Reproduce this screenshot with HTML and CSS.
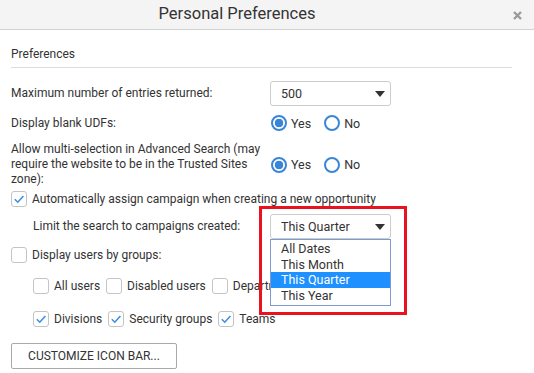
FILE: index.html
```html
<!DOCTYPE html>
<html lang="en">
<head>
  <meta charset="UTF-8" />
  <title>Personal Preferences</title>
  <link rel="stylesheet" href="styles.css">
</head>
<body>
  <div class="dialog">
    <div class="titlebar">
      <span class="title">Personal Preferences</span>
      <span class="close">
        <svg width="9" height="9" viewBox="0 0 9 9"><path d="M1 1 L8 8 M8 1 L1 8" stroke="#9a9a9a" stroke-width="2.4" /></svg>
      </span>
    </div>

    <div class="content">
      <div class="section-title">Preferences</div>

      <div class="row row-entries">
        <div class="label">Maximum number of entries returned:</div>
        <div class="select"><span>500</span><span class="caret"></span></div>
      </div>

      <div class="row row-udf">
        <div class="label">Display blank UDFs:</div>
        <div class="radios">
          <span class="radio checked"></span><span class="radio-text">Yes</span>
          <span class="radio"></span><span class="radio-text">No</span>
        </div>
      </div>

      <div class="row row-multi">
        <div class="label label-wrap">Allow multi-selection in Advanced Search (may require the website to be in the Trusted Sites zone):</div>
        <div class="radios">
          <span class="radio checked"></span><span class="radio-text">Yes</span>
          <span class="radio"></span><span class="radio-text">No</span>
        </div>
      </div>

      <div class="check-row row-campaign">
        <span class="checkbox checked"><svg width="16" height="16" viewBox="0 0 16 16"><path d="M3.8 8.2 L6.8 11.2 L12.4 5" fill="none" stroke="#3f8ee0" stroke-width="1.6" /></svg></span>
        <span>Automatically assign campaign when creating a new opportunity</span>
      </div>

      <div class="row row-limit">
        <div class="label indent">Limit the search to campaigns created:</div>
        <div class="select-wrap">
          <div class="select"><span>This Quarter</span><span class="caret"></span></div>
          <ul class="options">
            <li>All Dates</li>
            <li>This Month</li>
            <li class="selected">This Quarter</li>
            <li>This Year</li>
          </ul>
          <div class="highlight-box"></div>
        </div>
      </div>

      <div class="check-row row-groups">
        <span class="checkbox"></span>
        <span>Display users by groups:</span>
      </div>

      <div class="check-row indent row-users">
        <span class="checkbox"></span><span class="check-text">All users</span>
        <span class="checkbox"></span><span class="check-text">Disabled users</span>
        <span class="checkbox"></span><span class="check-text">Departments</span>
      </div>

      <div class="check-row indent row-divisions">
        <span class="checkbox checked"><svg width="16" height="16" viewBox="0 0 16 16"><path d="M3.8 8.2 L6.8 11.2 L12.4 5" fill="none" stroke="#3f8ee0" stroke-width="1.6" /></svg></span><span class="check-text">Divisions</span>
        <span class="checkbox checked"><svg width="16" height="16" viewBox="0 0 16 16"><path d="M3.8 8.2 L6.8 11.2 L12.4 5" fill="none" stroke="#3f8ee0" stroke-width="1.6" /></svg></span><span class="check-text">Security groups</span>
        <span class="checkbox checked"><svg width="16" height="16" viewBox="0 0 16 16"><path d="M3.8 8.2 L6.8 11.2 L12.4 5" fill="none" stroke="#3f8ee0" stroke-width="1.6" /></svg></span><span class="check-text">Teams</span>
      </div>

      <button class="btn">CUSTOMIZE ICON BAR...</button>
    </div>
  </div>
</body>
</html>
```

FILE: styles.css
```css
* { margin: 0; padding: 0; box-sizing: border-box; }
body {
  font-family: Roboto, 'Liberation Sans', sans-serif;
  font-size: 12px;
  line-height: 15px;
  color: #333;
  background: #fff;
}
.titlebar {
  height: 30px;
  background: #f4f4f4;
  border-bottom: 1px solid #d2d2d2;
  display: flex;
  align-items: center;
}
.title {
  flex: 1;
  text-align: center;
  padding-right: 26px;
  padding-bottom: 2px;
  font-size: 16.5px;
  color: #333;
}
.close { width: 34px; display: flex; justify-content: center; padding-top: 1px; }
.content { padding: 0 22px 0 11px; }
.section-title {
  padding: 17px 0 5px;
  border-bottom: 1px solid #dcdcdc;
}
.row {
  display: grid;
  grid-template-columns: 259px 1fr;
  align-items: center;
}
.label-wrap { padding-right: 4px; }
.indent { padding-left: 22px; }
.row-entries { margin-top: 13px; }
.row-udf { margin-top: 8px; height: 18px; }
.row-multi { margin-top: 10px; }
.row-campaign { margin-top: 3px; }
.row-limit { margin-top: 6px; }
.row-groups { margin-top: 7px; }
.row-users { margin-top: 13px; }
.row-divisions { margin-top: 15px; }

.select {
  width: 121px;
  height: 25px;
  border: 1px solid #ccc;
  border-radius: 3px;
  display: flex;
  align-items: center;
  justify-content: space-between;
  padding: 0 5px 0 10px;
  background: #fff;
  font-size: 12.5px;
}
.caret {
  width: 0; height: 0;
  border-left: 5.5px solid transparent;
  border-right: 5.5px solid transparent;
  border-top: 6px solid #333;
}
.radios { display: flex; align-items: center; padding-left: 1px; }
.radio {
  width: 16px; height: 16px;
  border: 2px solid #3a86d6;
  border-radius: 50%;
  background: #fff;
}
.radio.checked { background: radial-gradient(circle, #3a86d6 0 4px, #fff 4.6px); }
.radio-text { margin: 0 13px 0 4px; font-size: 12.5px; }

.check-row { display: flex; align-items: center; height: 18px; }
.checkbox {
  width: 16px; height: 16px;
  border: 1px solid #c4c4c4;
  border-radius: 3px;
  margin-right: 5px;
  display: flex;
  align-items: center;
  justify-content: center;
  flex-shrink: 0;
}
.checkbox svg { flex-shrink: 0; }
.check-text { margin-right: 6px; }

.select-wrap { position: relative; }
.options {
  position: absolute;
  left: 0; top: 25px;
  width: 121px;
  list-style: none;
  background: #fff;
  border: 1px solid #7d9bd2;
  padding: 1px 0 2px;
  font-size: 12.5px;
  line-height: 15.5px;
  z-index: 2;
}
.options li { padding-left: 10px; color: #333; }
.options li.selected { background: #1e90ff; color: #fff; }
.highlight-box {
  position: absolute;
  left: -11px; top: -8px;
  width: 148px; height: 109px;
  border: 3px solid #e8131f;
  z-index: 3;
}
.btn {
  margin-top: 15px;
  height: 26px;
  width: 166px;
  border: 1px solid #a9a9a9;
  border-radius: 2px;
  background: #fff;
  font-family: inherit;
  font-size: 12px;
  color: #333;
}
```
